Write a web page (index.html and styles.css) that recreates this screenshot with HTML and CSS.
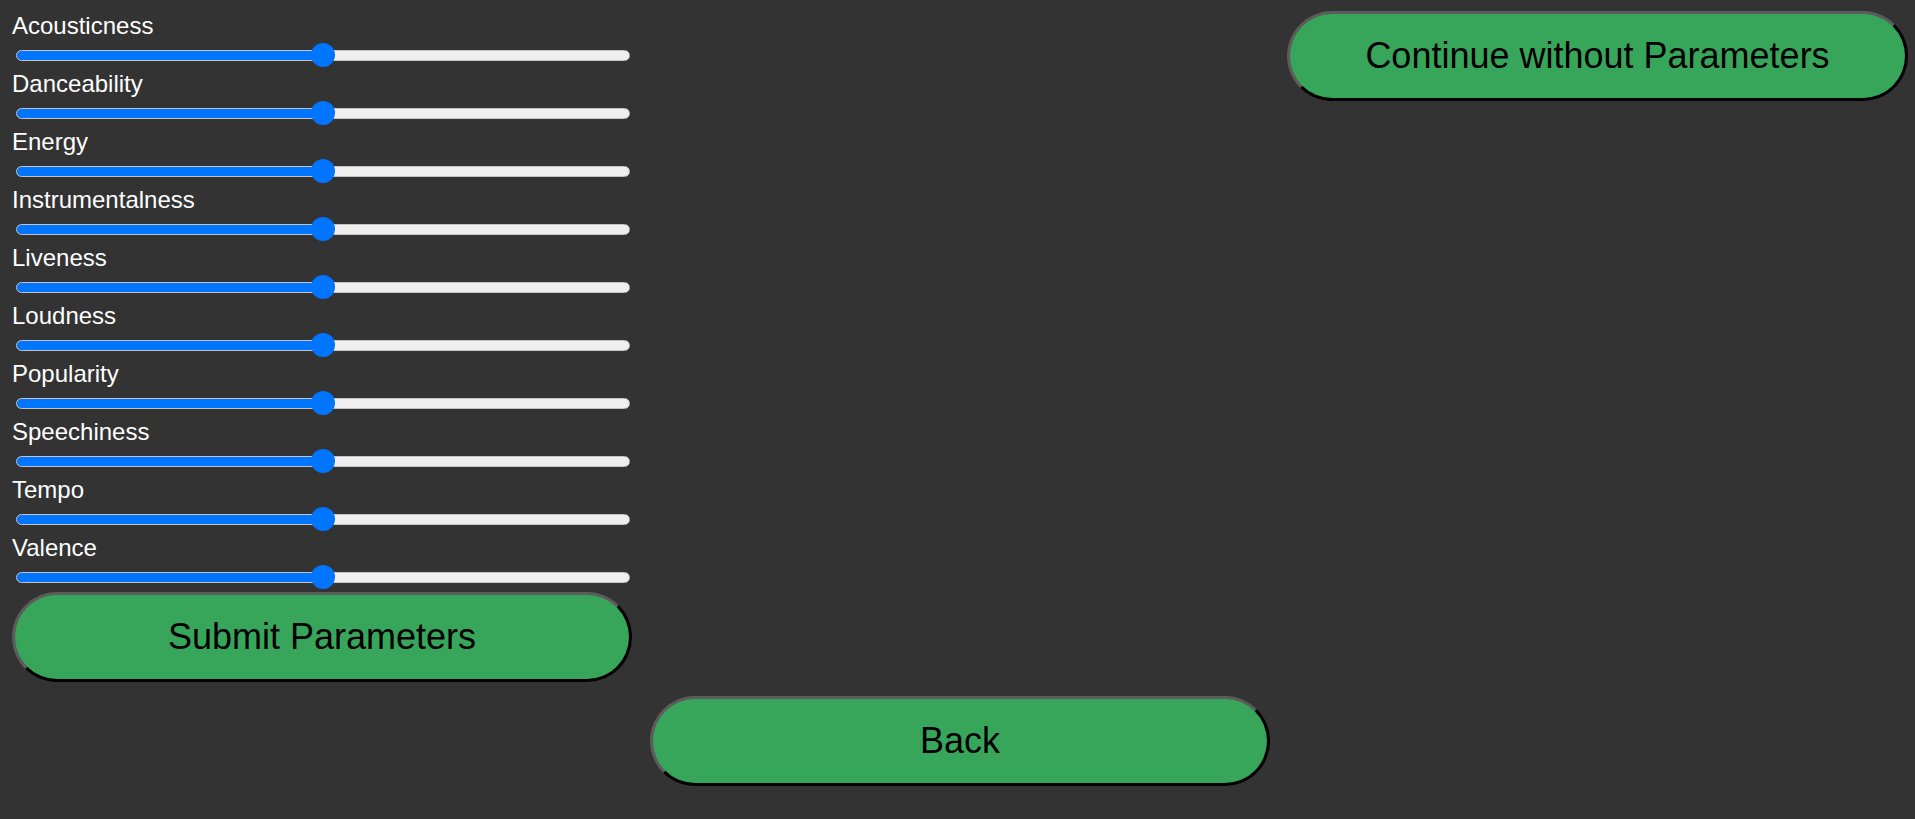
FILE: index.html
```html
<!DOCTYPE html>
<html lang="en">
<head>
<meta charset="utf-8">
<title>Parameters</title>
<link rel="stylesheet" href="styles.css">
</head>
<body>
<div class="page">
  <div class="top">
    <form class="params">
      <div class="row"><label class="lbl" for="p1">Acousticness</label><input class="slider" id="p1" type="range" min="0" max="100" value="50" style="--val:50%"></div>
      <div class="row"><label class="lbl" for="p2">Danceability</label><input class="slider" id="p2" type="range" min="0" max="100" value="50" style="--val:50%"></div>
      <div class="row"><label class="lbl" for="p3">Energy</label><input class="slider" id="p3" type="range" min="0" max="100" value="50" style="--val:50%"></div>
      <div class="row"><label class="lbl" for="p4">Instrumentalness</label><input class="slider" id="p4" type="range" min="0" max="100" value="50" style="--val:50%"></div>
      <div class="row"><label class="lbl" for="p5">Liveness</label><input class="slider" id="p5" type="range" min="0" max="100" value="50" style="--val:50%"></div>
      <div class="row"><label class="lbl" for="p6">Loudness</label><input class="slider" id="p6" type="range" min="0" max="100" value="50" style="--val:50%"></div>
      <div class="row"><label class="lbl" for="p7">Popularity</label><input class="slider" id="p7" type="range" min="0" max="100" value="50" style="--val:50%"></div>
      <div class="row"><label class="lbl" for="p8">Speechiness</label><input class="slider" id="p8" type="range" min="0" max="100" value="50" style="--val:50%"></div>
      <div class="row"><label class="lbl" for="p9">Tempo</label><input class="slider" id="p9" type="range" min="0" max="100" value="50" style="--val:50%"></div>
      <div class="row"><label class="lbl" for="p10">Valence</label><input class="slider" id="p10" type="range" min="0" max="100" value="50" style="--val:50%"></div>
      <button type="button" class="btn btn-submit">Submit Parameters</button>
    </form>
    <button type="button" class="btn btn-continue">Continue without Parameters</button>
  </div>
  <div class="bottom">
    <button type="button" class="btn">Back</button>
  </div>
</div>
</body>
</html>
```
FILE: styles.css
```css
html, body {
  margin: 0;
  padding: 0;
  background: #333333;
}
body {
  font-family: "Liberation Sans", Arial, sans-serif;
  color: #ffffff;
}
.page {
  padding: 11px 7px 0 12px;
}
.top {
  display: flex;
  justify-content: space-between;
  align-items: flex-start;
}
.params {
  width: 621px;
  display: flex;
  flex-direction: column;
  margin: 0;
  padding-top: 1px;
}
.row {
  display: flex;
  flex-direction: column;
}
.lbl {
  display: block;
  font-size: 24px;
  line-height: 28px;
  height: 28px;
}
.slider {
  -webkit-appearance: none;
  appearance: none;
  display: block;
  width: 614px;
  height: 30px;
  margin: 0 3px 0 4px;
  padding: 0;
  background: transparent;
}
.slider::-webkit-slider-runnable-track {
  height: 11px;
  border-radius: 6px;
  box-sizing: border-box;
  border: 1px solid #c4c4c4;
  background: linear-gradient(to right, #0075ff var(--val), #efefef var(--val));
}
.slider::-webkit-slider-thumb {
  -webkit-appearance: none;
  appearance: none;
  width: 24px;
  height: 24px;
  border-radius: 50%;
  background: #0075ff;
  border: none;
  margin-top: -7.5px;
}
.btn {
  box-sizing: border-box;
  width: 620px;
  height: 90px;
  border-radius: 9999px;
  border-width: 3px;
  border-style: solid;
  border-color: #5c5c5c #000000 #000000 #5c5c5c;
  background: #38a65a;
  color: #000000;
  font-family: "Liberation Sans", Arial, sans-serif;
  font-size: 36px;
  padding: 0;
  display: flex;
  align-items: center;
  justify-content: center;
}
.btn-continue {
  width: 621px;
}
.bottom {
  display: flex;
  justify-content: center;
  margin-top: 14px;
}
```
